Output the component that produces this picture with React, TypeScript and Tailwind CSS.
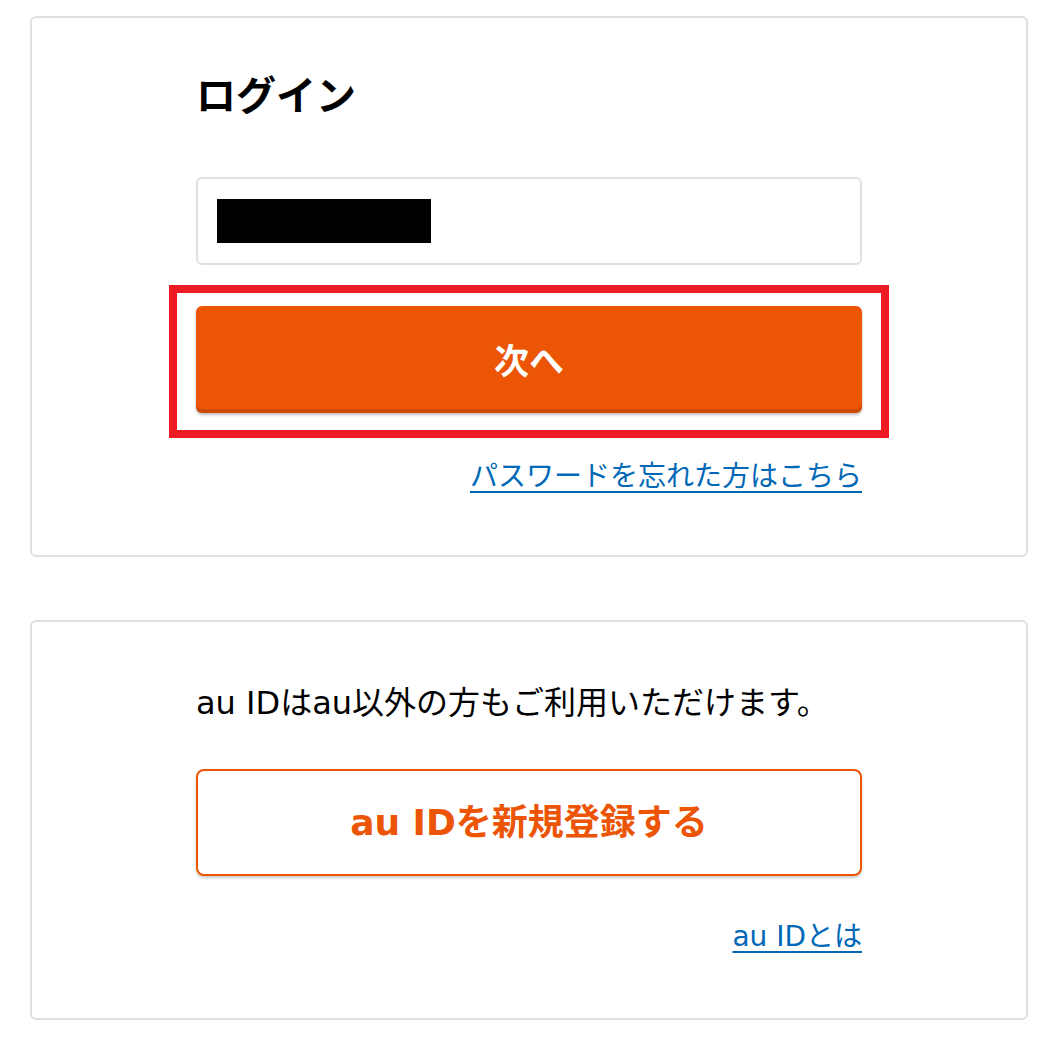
export default function App() {
  const font = "font-['DejaVu_Sans','Noto_Sans_CJK_JP',sans-serif]";
  return (
    <div className={`bg-white pl-[30px] pr-[16px] pt-[16px] pb-[19px] ${font}`}>
      <div className="flex h-[541px] flex-col items-center rounded-[6px] border-2 border-[#e0e0e0]">
        <div className="flex w-[666px] flex-col">
          <h1 className="mt-[55px] font-['Noto_Sans_CJK_JP',sans-serif] text-[40px] font-bold leading-[40px] text-black">ログイン</h1>
          <div className="mt-[64px] flex h-[88px] items-center rounded-[6px] border-2 border-[#e0e0e0] px-[19px]">
            <div className="h-[44px] w-[214px] bg-black" />
          </div>
          <div className="relative mt-[41px]">
            <button className="flex h-[107px] w-full items-center justify-center rounded-[6px] bg-[#eb5505] font-['Noto_Sans_CJK_JP',sans-serif] text-[35px] font-bold text-white shadow-[inset_0_-4px_0_rgba(0,0,0,0.12),0_2px_3px_rgba(0,0,0,0.25)]">
              次へ
            </button>
            <div className="pointer-events-none absolute -left-[27px] -right-[27px] -top-[21px] -bottom-[25px] border-[8px] border-[#ed1c24]" />
          </div>
          <div className="mt-[47px] flex justify-end">
            <a href="#" className="font-['Noto_Sans_CJK_JP',sans-serif] text-[28px] leading-[28px] text-[#0068b7] underline decoration-[2px] underline-offset-[5px]">
              パスワードを忘れた方はこちら
            </a>
          </div>
        </div>
      </div>
      <div className="mt-[63px] flex h-[400px] flex-col items-center rounded-[6px] border-2 border-[#e0e0e0]">
        <div className="flex w-[666px] flex-col">
          <p className="mt-[65px] text-[32px] leading-[32px] text-black">au IDはau以外の方もご利用いただけます。</p>
          <button className="mt-[50px] flex h-[107px] w-full items-center justify-center rounded-[8px] border-2 border-[#eb5505] bg-white text-[36px] font-bold text-[#eb5505] shadow-[0_2px_3px_rgba(0,0,0,0.2)]">
            au IDを新規登録する
          </button>
          <div className="mt-[47px] flex justify-end">
            <a href="#" className="text-[28px] leading-[28px] text-[#0068b7] underline decoration-[2px] underline-offset-[5px]">
              au IDとは
            </a>
          </div>
        </div>
      </div>
    </div>
  );
}
